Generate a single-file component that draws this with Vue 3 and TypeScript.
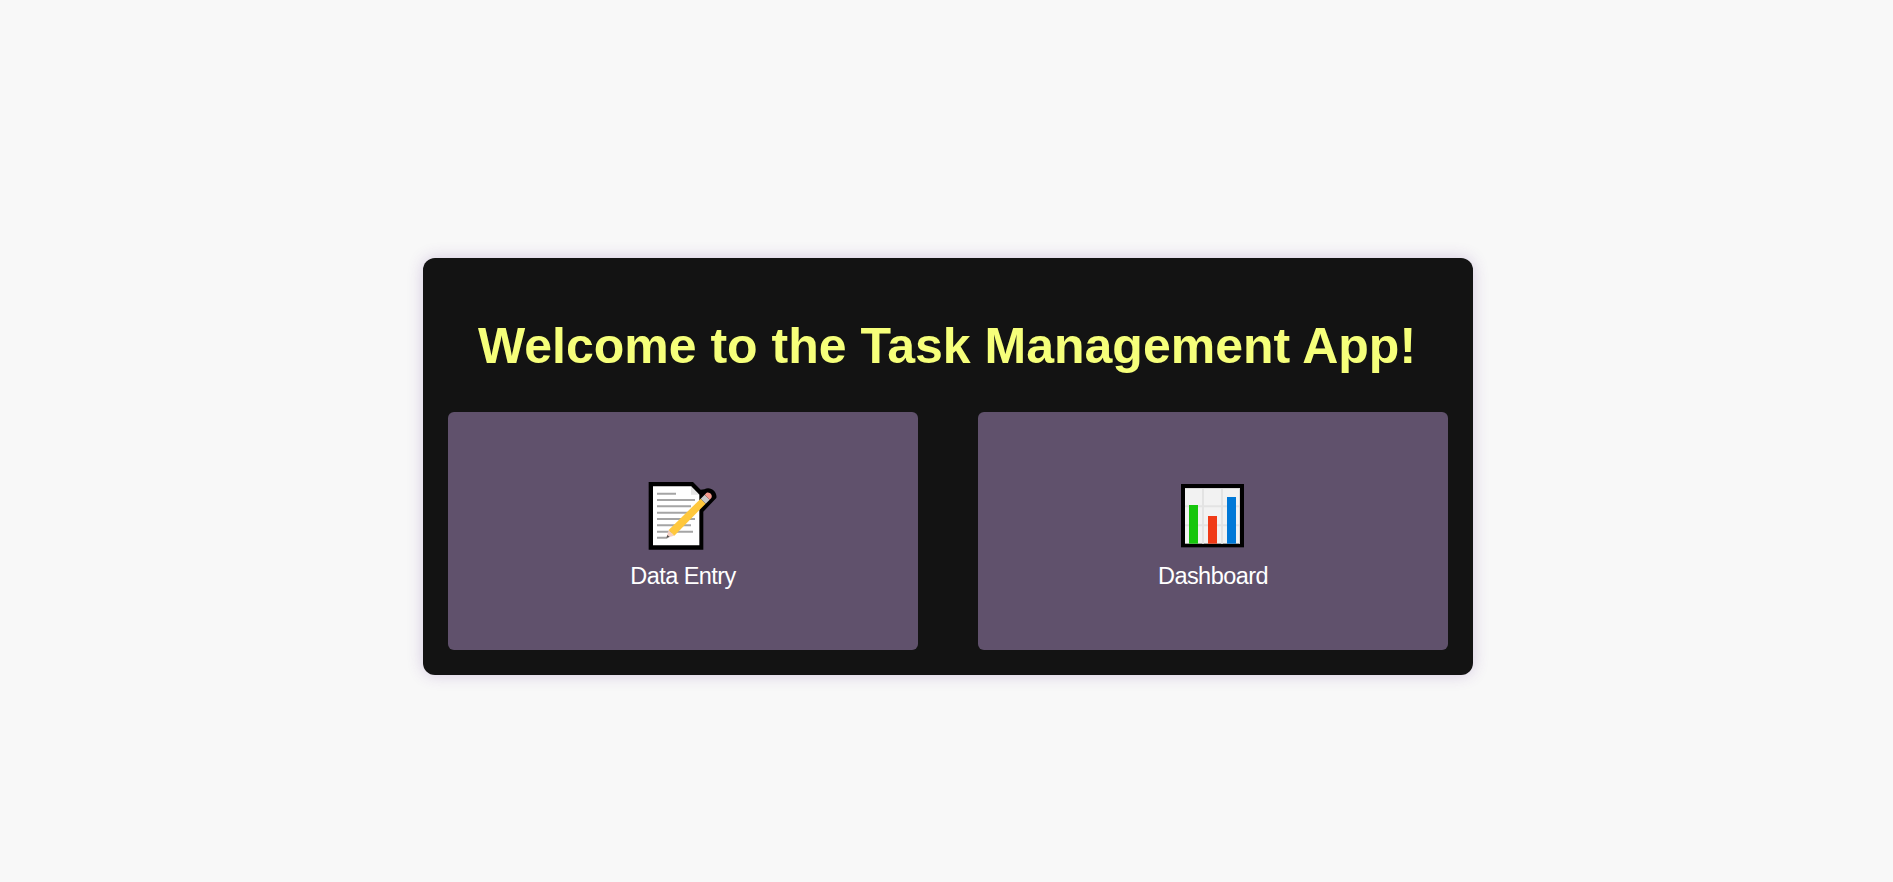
<script setup lang="ts">
interface Tile {
  id: 'entry' | 'dashboard'
  label: string
}

const tiles: Tile[] = [
  { id: 'entry', label: 'Data Entry' },
  { id: 'dashboard', label: 'Dashboard' },
]
</script>

<template>
  <main class="page">
    <section class="card">
      <h1 class="title">Welcome to the Task Management App!</h1>
      <nav class="tiles">
        <a v-for="tile in tiles" :key="tile.id" class="tile">
          <svg v-if="tile.id === 'entry'" class="icon" viewBox="0 0 258 240" aria-hidden="true">
            <path d="M26 21H159L182 44L193 43C212 32 233 52 229 69L190 110V224H26Z" fill="#000" />
            <path d="M39 34H153L178 59V211H39Z" fill="#fff" />
            <path d="M153 34V59H178Z" fill="#e5e5e5" />
            <path
              d="M51 56H108M51 75H165M51 94H153M51 113H146M51 132H165M51 151H153M51 170H159M51 188H82"
              stroke="#a5a5a5"
              stroke-width="6"
            />
            <path d="M79 188L86 165L103 182Z" fill="#f3cfc2" />
            <path d="M79 189L82 180L89 186Z" fill="#4d4d4d" />
            <path d="M86 165L182 71L197 86L103 182Z" fill="#ffc83d" />
            <path d="M182 71L194 59L209 74L197 86Z" fill="#c9c9c9" />
            <path d="M194 59L199 54C208 49 219 60 214 69L209 74Z" fill="#f69a8c" />
          </svg>
          <svg v-else class="icon" viewBox="0 0 258 240" aria-hidden="true">
            <rect x="33" y="27" width="189" height="190" />
            <rect x="45" y="39" width="165" height="167" fill="#f2f2f2" />
            <path d="M99 39V206M156 39V206M45 94H210M45 151H210" stroke="#e3e3e3" stroke-width="6" />
            <path d="M45 40.5H210M208.5 39V206" stroke="#d9d9d9" stroke-width="3" />
            <rect x="57" y="90" width="27" height="116" fill="#16c60c" />
            <rect x="114" y="123" width="27" height="83" fill="#f03a17" />
            <rect x="171" y="66" width="27" height="140" fill="#0078d7" />
          </svg>
          <span class="label">{{ tile.label }}</span>
        </a>
      </nav>
    </section>
  </main>
</template>

<style>
body {
  background: #f8f8f8;
}
</style>

<style scoped>
.page {
  box-sizing: border-box;
  min-height: 100vh;
  padding: 258px 0 0 3px;
  display: flex;
  justify-content: center;
  align-items: flex-start;
  font-family: 'Liberation Sans', Arial, sans-serif;
}
.card {
  box-sizing: border-box;
  width: 1050px;
  height: 417px;
  padding: 25px;
  border-radius: 12px;
  background: #131313;
  box-shadow: 0 0 16px rgba(100, 50, 150, 0.24);
}
.title {
  margin: 35px 2px 37px 0;
  color: #f6ff7a;
  font-size: 50px;
  line-height: 57px;
  font-weight: 700;
  text-align: center;
  white-space: nowrap;
}
.tiles {
  display: grid;
  grid-template-columns: 1fr 1fr;
  gap: 60px;
}
.tile {
  box-sizing: border-box;
  height: 238px;
  padding-top: 63px;
  display: flex;
  flex-direction: column;
  align-items: center;
  border-radius: 6px;
  background: #60516c;
  color: #fff;
}
.icon {
  display: block;
  width: 86px;
  height: 80px;
}
.label {
  margin-top: 7px;
  font-size: 23.5px;
  line-height: 28px;
  letter-spacing: -0.55px;
}
</style>
